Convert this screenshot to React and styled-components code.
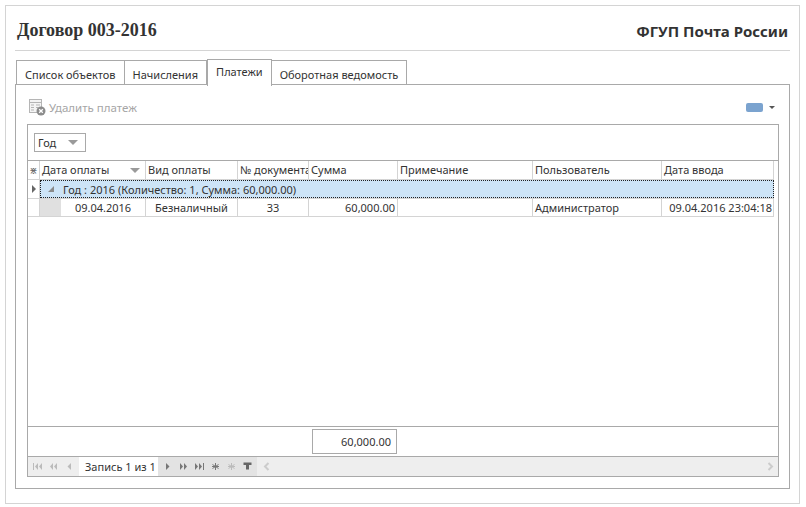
import React from 'react';
import styled, { createGlobalStyle } from 'styled-components';

const GlobalStyle = createGlobalStyle`
  html, body {
    margin: 0;
    padding: 0;
    background: #fff;
    font-family: "Noto Sans", "DejaVu Sans", sans-serif;
    font-size: 11px;
    color: #333;
  }
  * { box-sizing: border-box; }
`;

const Page = styled.div`
  width: 806px;
  height: 507px;
  padding: 5px 6px 3px 5px;
`;

const Frame = styled.div`
  height: 499px;
  border: 1px solid #d4d4d4;
  padding: 0 9px 0 9px;
  display: flex;
  flex-direction: column;
`;

const Header = styled.div`
  height: 45px;
  flex: none;
  border-bottom: 1px solid #d4d4d4;
  display: flex;
  justify-content: space-between;
  align-items: center;
  padding: 5px 2px 0 2px;
`;

const Title = styled.div`
  font-family: "Liberation Serif", serif;
  font-weight: 700;
  font-size: 18px;
  color: #333;
`;

const Org = styled.div`
  font-family: "Noto Sans", sans-serif;
  font-weight: 700;
  font-size: 15px;
  color: #333;
`;

const Tabs = styled.div`
  display: flex;
  height: 26px;
  margin-top: 8px;
  padding-left: 1px;
  align-items: flex-end;
  flex: none;
  position: relative;
  z-index: 1;
`;

const Tab = styled.div`
  height: ${({ $active }) => ($active ? '27px' : '25px')};
  margin-bottom: ${({ $active }) => ($active ? '-1px' : '0')};
  border: 1px solid #a9a9a9;
  border-bottom: ${({ $active }) => ($active ? 'none' : '1px solid #a9a9a9')};
  border-left: ${({ $first, $active }) => ($first || $active ? '1px solid #a9a9a9' : 'none')};
  border-right: ${({ $active }) => ($active ? '1px solid #a9a9a9' : '1px solid #a9a9a9')};
  background: #fff;
  padding: ${({ $active }) => ($active ? '4px 8px 0' : '6px 8px 0')};
  line-height: 15px;
  white-space: nowrap;
  color: #333;
`;

const Panel = styled.div`
  width: 775px;
  height: 405px;
  flex: none;
  border: 1px solid #a9a9a9;
  margin-top: -1px;
  padding: 0 10px 11px 11px;
  display: flex;
  flex-direction: column;
`;

const Toolbar = styled.div`
  height: 39px;
  flex: none;
  display: flex;
  align-items: center;
  justify-content: space-between;
  padding: 5px 4px 0 2px;
`;

const ToolButton = styled.div`
  display: flex;
  align-items: center;
  gap: 3px;
  color: #a6a6a6;
  font-size: 11.5px;
`;

const ViewButton = styled.div`
  display: flex;
  align-items: center;
  gap: 6px;
`;

const Swatch = styled.div`
  width: 17px;
  height: 9px;
  border-radius: 2px;
  background: #7ba3cf;
`;

const Caret = styled.div`
  width: 0;
  height: 0;
  border-left: 3px solid transparent;
  border-right: 3px solid transparent;
  border-top: 3px solid #555;
`;

const GridBox = styled.div`
  flex: 1;
  border: 1px solid #a9a9a9;
  display: flex;
  flex-direction: column;
  min-height: 0;
`;

const FilterBar = styled.div`
  height: 35px;
  flex: none;
  padding: 8px 0 0 6px;
`;

const Combo = styled.div`
  width: 52px;
  height: 19px;
  border: 1px solid #a9a9a9;
  display: flex;
  align-items: center;
  justify-content: space-between;
  padding: 0 7px 0 3px;
`;

const GrayCaret = styled.div`
  width: 0;
  height: 0;
  border-left: 5px solid transparent;
  border-right: 5px solid transparent;
  border-top: 5px solid #9a9a9a;
`;

const Table = styled.div`
  flex: 1;
  border-top: 1px solid #a9a9a9;
  border-bottom: 1px solid #a9a9a9;
  min-height: 0;
`;

const Row = styled.div`
  display: grid;
  grid-template-columns: 12px 106px 92px 71px 89px 135px 129px 112px;
  width: 746px;
  height: ${({ $h }) => $h}px;
  border-bottom: 1px solid #d4d4d4;
  border-right: 1px solid #d4d4d4;
`;

const Head = styled.div`
  border-right: 1px solid #d4d4d4;
  padding-left: 2px;
  display: flex;
  align-items: center;
  justify-content: space-between;
  line-height: 18px;
  white-space: nowrap;
  overflow: hidden;
  &:last-child { border-right: none; }
`;

const Indicator = styled.div`
  border-right: 1px solid #d4d4d4;
  display: flex;
  align-items: center;
  justify-content: center;
  color: #666;
  font-size: 10px;
`;

const HeadCaret = styled(GrayCaret)`
  margin-right: 5px;
`;

const GroupRow = styled.div`
  display: grid;
  grid-template-columns: 12px 1fr;
  width: 746px;
  height: 19px;
  border-bottom: 1px solid #d4d4d4;
`;

const GroupCell = styled.div`
  background: #cde4f7;
  outline: 1px dotted #222;
  outline-offset: -1px;
  display: flex;
  align-items: center;
  gap: 9px;
  padding-left: 8px;
  white-space: nowrap;
`;

const Expander = styled.div`
  width: 0;
  height: 0;
  border-left: 6px solid transparent;
  border-bottom: 6px solid #8a8a8a;
`;

const RightArrow = styled.div`
  width: 0;
  height: 0;
  border-top: 4px solid transparent;
  border-bottom: 4px solid transparent;
  border-left: 4px solid #666;
`;

const DataRow = styled.div`
  display: grid;
  grid-template-columns: 12px 21px 85px 92px 71px 89px 135px 129px 112px;
  width: 746px;
  height: 18px;
  border-bottom: 1px solid #d4d4d4;
  border-right: 1px solid #d4d4d4;
`;

const Indent = styled.div`
  background: #e0e0e0;
`;

const Cell = styled.div`
  border-right: 1px solid #d4d4d4;
  text-align: ${({ $align }) => $align || 'left'};
  padding: 0 2px;
  line-height: 18px;
  white-space: nowrap;
  overflow: hidden;
  &:last-child { border-right: none; }
`;

const Footer = styled.div`
  height: 30px;
  flex: none;
  border-bottom: 1px solid #a9a9a9;
  padding: 2px 0 0 284px;
`;

const Total = styled.div`
  width: 85px;
  height: 25px;
  border: 1px solid #a9a9a9;
  text-align: right;
  padding-right: 5px;
  line-height: 23px;
`;

const Navigator = styled.div`
  height: 19px;
  flex: none;
  background: #eee;
  display: flex;
  align-items: center;
`;

const NavGroup = styled.div`
  display: flex;
  align-items: center;
  gap: 5px;
  height: 100%;
  padding: ${({ $pad }) => $pad};
  background: ${({ $bg }) => $bg || 'transparent'};
`;

const RecordLabel = styled.div`
  background: #fff;
  height: 100%;
  width: 79px;
  padding-left: 6px;
  line-height: 19px;
  white-space: nowrap;
`;

const ScrollTrack = styled.div`
  flex: 1;
  display: flex;
  align-items: center;
  justify-content: space-between;
  padding: 0 4px 0 6px;
`;

const NavIcon = ({ d, color = '#999' }) => (
  <svg width="11" height="9" viewBox="0 0 11 9" fill={color}>
    <path d={d} />
  </svg>
);

const FIRST = 'M1 1h1v7H1zM6 1v7L3 4.5zM10 1v7L7 4.5z';
const PREV_PAGE = 'M5 1v7L2 4.5zM9 1v7L6 4.5z';
const PREV = 'M7 1v7L3.5 4.5z';
const NEXT = 'M4 1v7L7.5 4.5z';
const NEXT_PAGE = 'M2 1v7l3-3.5zM6 1v7l3-3.5z';
const LAST = 'M1 1v7l3-3.5zM5 1v7l3-3.5zM9 1h1v7H9z';

const Star = ({ color }) => (
  <svg width="11" height="9" viewBox="0 0 11 9" stroke={color} strokeWidth="1" fill="none">
    <path d="M5.5 1v7M2.5 2.5l6 4M8.5 2.5l-6 4M2 4.5h7" />
  </svg>
);

const DeleteIcon = () => (
  <svg width="17" height="17" viewBox="0 0 17 17">
    <rect x="0.5" y="0.5" width="12" height="13" fill="#f4f4f4" stroke="#b5b5b5" />
    <path d="M0.5 3.5h12M2 6h3M7 6h4M2 8.5h3M7 8.5h2M2 11h3" stroke="#b5b5b5" />
    <circle cx="12" cy="12" r="4.5" fill="#8c8c8c" />
    <path d="M10.2 10.2l3.6 3.6M13.8 10.2l-3.6 3.6" stroke="#fff" strokeWidth="1.3" />
  </svg>
);

const columns = ['Дата оплаты', 'Вид оплаты', '№ документа', 'Сумма', 'Примечание', 'Пользователь', 'Дата ввода'];

const App = () => (
  <Page>
    <GlobalStyle />
    <Frame>
      <Header>
        <Title>Договор 003-2016</Title>
        <Org>ФГУП Почта России</Org>
      </Header>
      <Tabs>
        <Tab $first>Список объектов</Tab>
        <Tab>Начисления</Tab>
        <Tab $active>Платежи</Tab>
        <Tab>Оборотная ведомость</Tab>
      </Tabs>
      <Panel>
        <Toolbar>
          <ToolButton>
            <DeleteIcon />
            Удалить платеж
          </ToolButton>
          <ViewButton>
            <Swatch />
            <Caret />
          </ViewButton>
        </Toolbar>
        <GridBox>
          <FilterBar>
            <Combo>
              Год
              <GrayCaret />
            </Combo>
          </FilterBar>
          <Table>
            <Row $h={19}>
              <Indicator>⋇</Indicator>
              {columns.map((c, i) => (
                <Head key={c}>
                  {c}
                  {i === 0 && <HeadCaret />}
                </Head>
              ))}
            </Row>
            <GroupRow>
              <Indicator><RightArrow /></Indicator>
              <GroupCell>
                <Expander />
                Год : 2016 (Количество: 1, Сумма: 60,000.00)
              </GroupCell>
            </GroupRow>
            <DataRow>
              <Indicator />
              <Indent />
              <Cell $align="center">09.04.2016</Cell>
              <Cell $align="center">Безналичный</Cell>
              <Cell $align="center">33</Cell>
              <Cell $align="right">60,000.00</Cell>
              <Cell />
              <Cell>Администратор</Cell>
              <Cell $align="right">09.04.2016 23:04:18</Cell>
            </DataRow>
          </Table>
          <Footer>
            <Total>60,000.00</Total>
          </Footer>
          <Navigator>
            <NavGroup $pad="0 4px">
              <NavIcon d={FIRST} color="#bbb" />
              <NavIcon d={PREV_PAGE} color="#bbb" />
              <NavIcon d={PREV} color="#bbb" />
            </NavGroup>
            <RecordLabel>Запись 1 из 1</RecordLabel>
            <NavGroup $pad="0 4px" $bg="#e3e3e3">
              <NavIcon d={NEXT} color="#777" />
              <NavIcon d={NEXT_PAGE} color="#777" />
              <NavIcon d={LAST} color="#777" />
              <Star color="#777" />
              <Star color="#bbb" />
              <svg width="11" height="9" viewBox="0 0 11 9" fill="#666">
                <path d="M1.5 0.5h8v2.5H7v4.5H4V3H1.5z" />
              </svg>
            </NavGroup>
            <ScrollTrack>
              <svg width="7" height="9" viewBox="0 0 7 9" fill="none" stroke="#ccc" strokeWidth="2">
                <path d="M5.5 1L2 4.5 5.5 8" />
              </svg>
              <svg width="7" height="9" viewBox="0 0 7 9" fill="none" stroke="#ccc" strokeWidth="2">
                <path d="M1.5 1L5 4.5 1.5 8" />
              </svg>
            </ScrollTrack>
          </Navigator>
        </GridBox>
      </Panel>
    </Frame>
  </Page>
);

export default App;
